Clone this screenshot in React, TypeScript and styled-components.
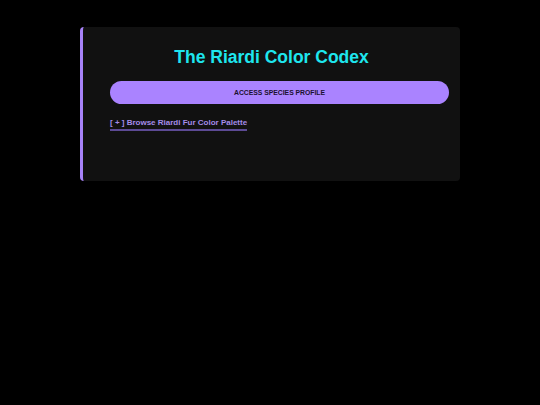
import styled, { createGlobalStyle } from "styled-components";

const Global = createGlobalStyle`
  html, body {
    margin: 0;
    padding: 0;
    background: #000;
  }
  body {
    font-family: "Liberation Sans", Arial, sans-serif;
  }
`;

const Page = styled.div`
  display: flex;
  justify-content: center;
  align-items: flex-start;
  padding-top: 27px;
  min-height: 405px;
  box-sizing: border-box;
`;

const Card = styled.div`
  width: 380px;
  min-height: 154px;
  box-sizing: border-box;
  background: #111111;
  border-left: 3px solid #a782f8;
  border-radius: 4px;
  padding: 20px 11px 20px 27px;
`;

const Title = styled.h1`
  margin: 0 0 13px -16px;
  text-align: center;
  color: #1ee6ee;
  font-size: 17.5px;
  font-weight: 700;
  line-height: 21px;
`;

const ActionButton = styled.button`
  display: block;
  width: 100%;
  height: 23px;
  border: none;
  border-radius: 12px;
  background: #aa83ff;
  color: #1a1030;
  font-family: inherit;
  font-size: 6.8px;
  font-weight: 700;
  text-transform: uppercase;
  cursor: pointer;
`;

const PaletteLink = styled.a`
  display: inline-block;
  margin-top: 14px;
  padding-bottom: 1px;
  color: #a48ce8;
  font-size: 8px;
  line-height: 10px;
  font-weight: 700;
  text-decoration: none;
  border-bottom: 2px solid #5c4a94;
  cursor: pointer;
`;

export default function App() {
  return (
    <>
      <Global />
      <Page>
        <Card>
          <Title>The Riardi Color Codex</Title>
          <ActionButton>Access Species Profile</ActionButton>
          <PaletteLink>[ + ] Browse Riardi Fur Color Palette</PaletteLink>
        </Card>
      </Page>
    </>
  );
}
